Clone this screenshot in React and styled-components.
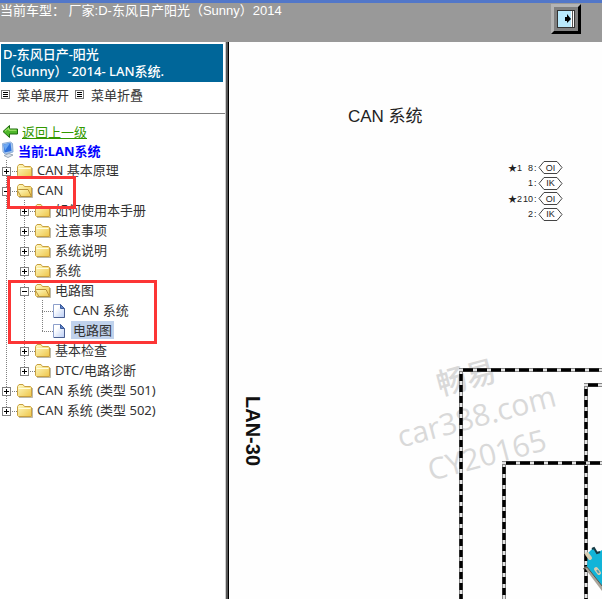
import { useState } from "react";
import styled, { createGlobalStyle } from "styled-components";

const tree = [
  { label: "CAN 基本原理", type: "folder" },
  {
    label: "CAN",
    type: "folder",
    open: true,
    mark: "short",
    children: [
      { label: "如何使用本手册", type: "folder" },
      { label: "注意事项", type: "folder" },
      { label: "系统说明", type: "folder" },
      { label: "系统", type: "folder" },
      {
        label: "电路图",
        type: "folder",
        open: true,
        mark: "long",
        children: [
          { label: "CAN 系统", type: "page" },
          { label: "电路图", type: "page", selected: true },
        ],
      },
      { label: "基本检查", type: "folder" },
      { label: "DTC/电路诊断", type: "folder" },
    ],
  },
  { label: "CAN 系统 (类型 501)", type: "folder" },
  { label: "CAN 系统 (类型 502)", type: "folder" },
];

const pins = [
  { id: 1, note: "★1", pin: "8", code: "OI" },
  { id: 2, note: "", pin: "1", code: "IK" },
  { id: 3, note: "★2", pin: "10", code: "OI" },
  { id: 4, note: "", pin: "2", code: "IK" },
];

const wires = [
  { d: "M232 328 V2000", dash: "4 7" },
  { d: "M230 328 H2000", dash: "4 10" },
  { d: "M357 343 V2000", dash: "4 7" },
  { d: "M355 343 H2000", dash: "4 10" },
  { d: "M275 421 V2000", dash: "4 7" },
  { d: "M273 421 H2000", dash: "4 10" },
];

const FolderIcon = ({ open }) => (
  <svg width="17" height="18" viewBox="0 -2 17 18" aria-hidden="true">
    <defs>
      <linearGradient id="folder" x1="0" y1="0" x2="1" y2="1">
        <stop offset="0" stopColor="#fffbc4" />
        <stop offset="1" stopColor="#eec64a" />
      </linearGradient>
    </defs>
    <path d="M2 14.5 H15.5 V5" fill="none" stroke="#8f8a70" opacity="0.6" />
    <path
      d="M.5 12.5 V3.5 L2 1.5 H6 L7.5 3.5 H13.5 L14.5 4.5 V13.5 H1.5 Z"
      fill="url(#folder)"
      stroke="#c9a040"
    />
    {open ? (
      <path
        d="M.5 7.5 Q1 6.5 2 6.5 H11 L14.5 13.5 H4 Z"
        fill="url(#folder)"
        stroke="#b8923a"
      />
    ) : (
      <path d="M1.5 5.5 H13.5" stroke="#fffde0" />
    )}
  </svg>
);

const PageIcon = () => (
  <svg width="17" height="18" viewBox="0 -2 17 18" aria-hidden="true">
    <defs>
      <linearGradient id="page" x1="0" y1="0" x2="1" y2="1">
        <stop offset="0.3" stopColor="#ffffff" />
        <stop offset="1" stopColor="#b9cdf5" />
      </linearGradient>
    </defs>
    <path
      d="M.5 1.5 H7.5 L11.5 5.5 V14.5 H.5 Z"
      fill="url(#page)"
      stroke="#8da0cc"
    />
    <path d="M7.5 1.5 V5.5 H11.5 Z" fill="#5d83c9" stroke="#3d5c9c" />
    <path d="M1 14.5 H11.5 V6" fill="none" stroke="#4b5f91" />
  </svg>
);

const BackIcon = () => (
  <svg width="17" height="16" viewBox="0 0 17 16" aria-hidden="true">
    <path
      d="M1 8.5 L7.5 2.5 V6 H15.5 V11 H7.5 V14.5 Z"
      fill="#4fb82b"
      stroke="#1d6b0c"
    />
    <path d="M3 8.2 L6.8 5 V7.2 H14.5" fill="none" stroke="#b2ec7c" />
  </svg>
);

const ComputerIcon = () => (
  <svg width="15" height="18" viewBox="0 0 15 18" aria-hidden="true">
    <path
      d="M2.5 2.5 L10.5 1 L12.5 2.5 L13 11 L5 13 L3 11 Z"
      fill="#a9c8ee"
      stroke="#8fb0da"
    />
    <path d="M3.5 3.5 L10.5 2 L11.5 10 L4.5 11.5 Z" fill="#2f72dc" />
    <path d="M3.5 3.5 L10 2.2 L5 9.5 Z" fill="#6da8f2" />
    <path d="M4 14.5 L9 12.5 L13 14 L8 16.5 Z" fill="#dbe3ec" stroke="#9aa8b8" />
  </svg>
);

const ListIcon = () => (
  <svg width="9" height="9" viewBox="0 0 9 9" aria-hidden="true">
    <rect x=".5" y=".5" width="8" height="8" fill="#fff" stroke="#777" />
    <path d="M2 2.5 H7 M2 4.5 H7 M2 6.5 H7" stroke="#000" />
  </svg>
);

const ExitIcon = () => (
  <svg width="18" height="18" viewBox="0 0 18 18" aria-hidden="true">
    <rect x=".5" y=".5" width="17" height="17" fill="#b9e9fc" stroke="#333" />
    <rect x="14" y="1" width="3" height="16" fill="#fff" />
    <path d="M15.5 1 V17" stroke="#555" />
    <path d="M8 7 H10 V4 L14 9 L10 13 V11 H8 Z" fill="#000" />
  </svg>
);

const TreeNode = ({ node }) => {
  const [open, setOpen] = useState(!!node.open);
  const isFolder = node.type === "folder";

  return (
    <Node>
      <Row>
        {isFolder ? (
          <Toggle
            type="button"
            aria-label={node.label}
            aria-expanded={open}
            onClick={() => setOpen(!open)}
          >
            <svg width="9" height="9" viewBox="0 0 9 9">
              <rect
                x=".5"
                y=".5"
                width="8"
                height="8"
                fill="#fff"
                stroke="#808080"
              />
              <path d={open ? "M2 4.5 H7" : "M2 4.5 H7 M4.5 2 V7"} stroke="#000" />
            </svg>
          </Toggle>
        ) : (
          <Branch />
        )}
        {isFolder ? <FolderIcon open={open} /> : <PageIcon />}
        <NodeLink href="#" $selected={node.selected}>
          {node.label}
        </NodeLink>
      </Row>
      {node.children && open && (
        <Branches>
          {node.children.map((child) => (
            <TreeNode key={child.label} node={child} />
          ))}
        </Branches>
      )}
      {node.mark && <Mark $long={node.mark === "long"} />}
    </Node>
  );
};

const App = () => {
  return (
    <Page>
      <GlobalStyle />
      <Header>
        <p>当前车型： 厂家:D-东风日产阳光（Sunny）2014</p>
        <ExitButton type="button" aria-label="退出">
          <ExitIcon />
        </ExitButton>
      </Header>
      <Body>
        <Sidebar>
          <CarTitle>
            D-东风日产-阳光
            <br />
            （Sunny）-2014- LAN系统.
          </CarTitle>
          <MenuBar>
            <MenuButton type="button">
              <ListIcon />
              菜单展开
            </MenuButton>
            <MenuButton type="button">
              <ListIcon />
              菜单折叠
            </MenuButton>
          </MenuBar>
          <BackRow>
            <BackIcon />
            <a href="#">返回上一级</a>
          </BackRow>
          <CurrentRow>
            <ComputerIcon />
            当前:LAN系统
          </CurrentRow>
          <Tree>
            {tree.map((node) => (
              <TreeNode key={node.label} node={node} />
            ))}
          </Tree>
        </Sidebar>
        <Diagram>
          <Watermark>
            畅易
            <br />
            car388.com
            <br />
            CY20165
          </Watermark>
          <Wires aria-hidden="true">
            {wires.map(({ d, dash }) => (
              <g key={d} fill="none">
                <path d={d} stroke="#555" strokeWidth="4" />
                <path d={d} stroke="#000" strokeWidth="3" />
                <path
                  d={d}
                  stroke="#e4e4e4"
                  strokeWidth="3"
                  strokeDasharray={dash}
                />
              </g>
            ))}
            <g transform="translate(355 505)">
              <path d="M0 20 L4 19 L30 52 V60 Z" fill="#a9a59b" />
              <path
                d="M4 6 L9 1 L13 6 L18 3 L40 -4 V66 L3 20 Z"
                fill="#12b4d8"
              />
              <path
                d="M8 2 L10 1 L13 6 L16 5"
                fill="none"
                stroke="#153a44"
                strokeWidth="2"
              />
              <path d="M-1 22 L3 20 L30 54" fill="none" stroke="#5c574c" />
              <path
                d="M3 7 L6 11 M12 22 L15 26"
                stroke="#d9cfb2"
                strokeWidth="4"
                strokeLinecap="round"
              />
              <path d="M13 23 L15 26" stroke="#5b98a5" strokeWidth="2" />
            </g>
          </Wires>
          <DiagramTitle>CAN 系统</DiagramTitle>
          <PinList>
            {pins.map(({ id, note, pin, code }) => (
              <Pin key={id}>
                <span>{note}</span>
                <PinNumber>{pin}</PinNumber>
                <span>:</span>
                <PinCode>
                  <svg width="25" height="13" viewBox="0 0 25 13">
                    <path
                      d="M1 6.5 L6 .5 H19 L24 6.5 L19 12.5 H6 Z"
                      fill="#fff"
                      stroke="#444"
                    />
                  </svg>
                  <span>{code}</span>
                </PinCode>
              </Pin>
            ))}
          </PinList>
          <SheetNumber>LAN-30</SheetNumber>
        </Diagram>
      </Body>
    </Page>
  );
};

export default App;

const GlobalStyle = createGlobalStyle`
  * {
    box-sizing: border-box;
    margin: 0;
    padding: 0;
  }

  body {
    background: #fff;
    color: #333;
    font-family: "Noto Sans", "Noto Sans CJK SC", sans-serif;
    font-size: 13px;
  }

  button {
    border: none;
    background: none;
    color: inherit;
    font: inherit;
    cursor: pointer;
  }

  svg {
    display: block;
    flex-shrink: 0;
  }
`;

const Page = styled.div`
  min-height: 100vh;
  display: flex;
  flex-direction: column;
`;

const Header = styled.header`
  height: 42px;
  display: flex;
  justify-content: space-between;
  align-items: flex-start;
  padding-right: 21px;
  border-top: 3px solid #5277c9;
  background: #999;
  color: #fff;
  font-family: "Liberation Sans", "Noto Sans CJK SC", sans-serif;

  p {
    line-height: 16px;
  }
`;

const ExitButton = styled.button`
  display: grid;
  margin-top: 1px;
  padding: 3px;
  border: 3px solid;
  border-color: #b4b4b4 #000 #000 #b4b4b4;
  background: #808080;
`;

const Body = styled.div`
  flex: 1;
  display: flex;
`;

const Sidebar = styled.nav`
  flex: 0 0 226px;
  border-right: 1px solid #ccc;
  white-space: nowrap;
`;

const CarTitle = styled.h1`
  margin: 2px 2px 0 1px;
  padding: 2px;
  background: #069;
  color: #fff;
  font-size: 13px;
  font-weight: 500;
  line-height: 17px;
`;

const MenuBar = styled.div`
  height: 32px;
  display: flex;
  align-items: center;
  gap: 6px;
  padding: 0 1px 6px;
  border-bottom: 1px solid #808080;
`;

const MenuButton = styled.button`
  display: flex;
  align-items: center;
  gap: 7px;
`;

const BackRow = styled.div`
  height: 18px;
  display: flex;
  align-items: center;
  gap: 3px;
  margin-top: 8px;
  padding-left: 2px;

  a {
    color: #390;
  }
`;

const CurrentRow = styled.div`
  height: 20px;
  display: flex;
  align-items: center;
  gap: 3px;
  color: #00f;
  font-weight: 700;
`;

const Tree = styled.ul`
  list-style: none;
`;

const Branches = styled(Tree)`
  padding-left: 18px;
`;

const Node = styled.li`
  position: relative;
  background: repeating-linear-gradient(#808080 0 1px, transparent 1px 2px) 6px
    0 / 1px 100% no-repeat;

  &:last-child {
    background-size: 1px 11px;
  }
`;

const Row = styled.div`
  height: 20px;
  display: flex;
  align-items: center;
`;

const Branch = styled.span`
  width: 17px;
  height: 20px;
  background: repeating-linear-gradient(
      90deg,
      #808080 0 1px,
      transparent 1px 2px
    )
    6px 11px / 11px 1px no-repeat;
`;

const Toggle = styled(Branch).attrs({ as: "button" })`
  padding: 2px 0 0 2px;
`;

const NodeLink = styled.a`
  margin-left: 1px;
  padding: 0 2px;
  background: ${(props) => (props.$selected ? "#c0d2ec" : "transparent")};
  color: #333;
  line-height: 18px;
  text-decoration: none;
`;

const Mark = styled.span`
  position: absolute;
  z-index: 1;
  top: ${(props) => (props.$long ? "0" : "-4px")};
  left: ${(props) => (props.$long ? "-10px" : "7px")};
  width: ${(props) => (props.$long ? "149px" : "69px")};
  height: ${(props) => (props.$long ? "64px" : "33px")};
  border: 3px solid #fc3535;
  pointer-events: none;
`;

const Diagram = styled.main`
  flex: 1;
  position: relative;
  overflow: hidden;
  border-left: 2px solid #555;
  box-shadow: inset 1px 0 #000;
  background: #fefefe;
  color: #222;
  font-family: "Liberation Sans", "Noto Sans CJK SC", sans-serif;
`;

const Wires = styled.svg`
  position: absolute;
  top: 0;
  left: 1px;
  width: 100%;
  height: 100%;
`;

const Watermark = styled.p`
  position: absolute;
  top: 314px;
  left: 167px;
  color: #d9d9d9;
  font-family: "Open Sans", "Noto Sans CJK SC", sans-serif;
  font-size: 30px;
  font-weight: 500;
  line-height: 40px;
  text-align: center;
  transform: rotate(-15deg);
`;

const DiagramTitle = styled.h2`
  position: absolute;
  top: 65px;
  left: 120px;
  font-size: 17px;
  font-weight: 400;
  line-height: 20px;
`;

const PinList = styled.ul`
  position: absolute;
  top: 118px;
  left: 280px;
  height: 62px;
  display: grid;
  list-style: none;
  font-size: 9px;
  line-height: 12px;
`;

const Pin = styled.li`
  display: grid;
  grid-template-columns: 14px 12px 4px 25px;
  align-items: center;
  white-space: nowrap;
`;

const PinNumber = styled.span`
  justify-self: end;
  padding-right: 1px;
`;

const PinCode = styled.span`
  display: grid;
  place-items: center;
  font-size: 9px;

  > * {
    grid-area: 1 / 1;
  }
`;

const SheetNumber = styled.p`
  position: absolute;
  top: 354px;
  left: 13px;
  color: #111;
  font-size: 20px;
  font-weight: 700;
  line-height: 24px;
  writing-mode: vertical-rl;
`;
